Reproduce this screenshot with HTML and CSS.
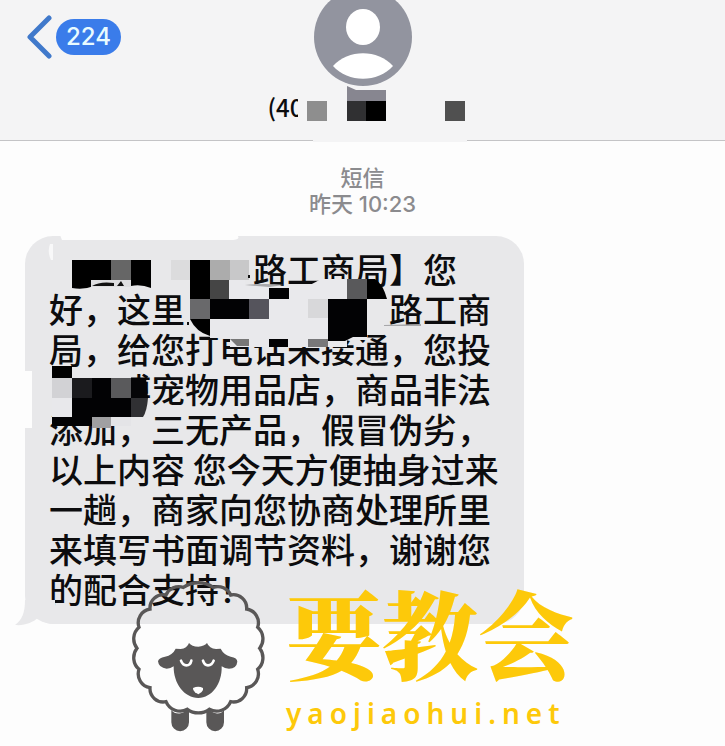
FILE: index.html
```html
<!DOCTYPE html>
<html lang="zh-CN">
<head>
    <meta charset="utf-8">
    <meta name="viewport" content="width=device-width, initial-scale=1">
    <title>短信</title>
    <link rel="stylesheet" href="styles.css">
</head>
<body>
<header class="topbar">
    <a class="back" href="#" aria-label="返回">
        <svg class="chevron" viewBox="0 0 26 44"><path d="M23 3 4 22 23 41"/></svg>
        <span class="count">224</span>
    </a>
    <div class="contact">
        <svg class="avatar" viewBox="0 12 98 86">
            <circle cx="49" cy="49" r="49" fill="#92949f"/>
            <ellipse cx="49" cy="39" rx="17" ry="18" fill="#fff"/>
            <path d="M19 78C34 61 64 61 79 78C64 95 34 95 19 78Z" fill="#fff"/>
        </svg>
        <div class="number">
            <span class="digits">(40</span>
            <svg class="number-mask" viewBox="300 87 168 36">
                <path d="M299 90h9v32h-9z" fill="#f4f4f5"/>
                <path d="M308 102h20v20h-20z" fill="#8e8e8e"/>
                <path d="M348 87l9 4h30v11h-39z" fill="#878690"/>
                <path d="M348 102h20v20h-20z" fill="#303032"/>
                <path d="M367 102h20v20h-20z" fill="#000"/>
                <path d="M446 102h20v20h-20z" fill="#505050"/>
            </svg>
        </div>
    </div>
</header>

<main class="thread">
    <p class="stamp">短信<br>昨天 10:23</p>
    <div class="bubble">
        <svg class="tail" viewBox="0 0 40 28"><path d="M10 0C10 13 7 20 0 25C10 26 18 22 23 18C28 22 33 24 40 24V0Z"/></svg>
        <p class="message">
            <span class="gap-six"></span>路工商局】您<br>
            好，这里<span class="gap-six"></span>路工商<br>
            局，给您打电话未接通，您投<br>
            <span class="gap-two"></span>博宠物用品店，商品非法<br>
            添加，三无产品，假冒伪劣，<br>
            以上内容 您今天方便抽身过来<br>
            一趟，商家向您协商处理所里<br>
            来填写书面调节资料，谢谢您<br>
            的配合支持！
        </p>
        <!-- mosaic over the private parts -->
        <svg class="mosaic" viewBox="25 236 499 388">
            <path d="M60 235H237Q242 240 230 240H62Z" fill="#fdfdfd"/>
            <path d="M24 371h8v57h-8z" fill="#fdfdfd"/>
            <path d="M50 244q-3 8 1 16h2v-16z" fill="#f8f8f9"/>

            <path d="M72 260h79v28q-10-4-20-2h-37q-10 4-22 2z" fill="#000"/>
            <path d="M111 260h20v20h-20z" fill="#666"/>
            <path d="M91 280h40v7h-40z" fill="#dedee0"/>
            <path d="M92 286q8-5 22-3v3zM117 286l4-5 3 5z" fill="#111"/>
            <path d="M171 260h19v20h-19z" fill="#dcdcdd"/>
            <path d="M210 280H245V286H308Q316 282 321 279H367V340H347V347H230V338H210z" fill="#e9e9ec"/>
            <path d="M190 260h20v76q-14-4-20-17z" fill="#000"/>
            <path d="M210 260h20v20h-20z" fill="#acacac"/>
            <path d="M230 260h19v20h-19z" fill="#c8c8c9"/>
            <path d="M210 280h19v19h-19z" fill="#454545"/>
            <path d="M190 299h20v20h-20z" fill="#69696b"/>
            <path d="M210 299h39v20h-39z" fill="#020204"/>
            <path d="M249 299h20v20h-20z" fill="#55545c"/>
            <path d="M269 288h20v11h-20z" fill="#020204"/>
            <path d="M347 279h20v20h-20z" fill="#59595b"/>
            <path d="M367 279h8q8 5 12 20h-20z" fill="#000"/>
            <path d="M308 299h20v19h-20z" fill="#d8d8da"/>
            <path d="M328 299h39v38h-14l-8 4h-17z" fill="#020204"/>
            <path d="M230 339h19v7h-12z" fill="#777"/>
            <path d="M269 339h19v8h-19z" fill="#020204"/>
            <path d="M308 339h20v8h-20z" fill="#78787a"/>
            <path d="M187 322h2v3h-2zM248 275h2v3h-2z" fill="#111"/>
            <path d="M245 285q20-2 39 0l-15 2zM384 325l37-1v2h-37z" fill="#a8a8ab"/>

            <path d="M52 366h20v12h-20z" fill="#000"/>
            <path d="M52 378h20v20h-20z" fill="#d2d2d5"/>
            <path d="M52 398h20v19h-20z" fill="#e8e8eb"/>
            <path d="M72 378h59v39H92v9H52v-9h20z" fill="#020204"/>
            <path d="M72 378h20v20h-20z" fill="#1b1b1e"/>
            <path d="M111 378h20v20h-20z" fill="#5a5a5c"/>
            <path d="M119 370h12v8h-12z" fill="#e8e8ea"/>
            <path d="M131 378h15l2 20h-17z" fill="#050507"/>
            <path d="M131 398h17q-1 13-5 19h-12z" fill="#303033"/>
            <path d="M92 417h19v11h-19z" fill="#a0a0a2"/>
            <path d="M111 417h20v9h-20z" fill="#e4e4e7"/>
        </svg>
    </div>
</main>

<div class="watermark">
    <svg class="sheep" viewBox="0 0 480 528">
        <path class="wool" d="M190 52A80 80 0 0 1 280 52A42 42 0 0 1 332 75A40 40 0 0 1 380 117A42 42 0 0 1 413 172A46 46 0 0 1 419 235A46 46 0 0 1 413 298A42 42 0 0 1 380 353A40 40 0 0 1 332 395A46 46 0 0 1 268 418A56 56 0 0 1 202 418A46 46 0 0 1 138 395A40 40 0 0 1 90 353A42 42 0 0 1 57 298A46 46 0 0 1 51 235A46 46 0 0 1 57 172A42 42 0 0 1 90 117A40 40 0 0 1 138 75A42 42 0 0 1 190 52Z"/>
        <path d="M154 420Q164 433 182 430Q196 428 201 414L207 424V457A26 26 0 0 1 154 457ZM312 420Q302 433 288 430Q274 428 268 414L259 424V457A26 26 0 0 0 312 457Z" fill="#595757"/>
        <path d="M207 219Q215 230 235 230Q253 229 261 219Q268 236 288 237L302 236Q311 254 332 260Q352 263 352 275Q350 295 327 296Q314 296 305 289C307 340 276 384 235 384C193 384 160 340 161 289Q152 296 140 296Q116 294 114 274Q116 263 135 260Q158 255 167 236L182 237Q201 236 207 219Z" fill="#595757"/>
        <path class="eyes" d="M183 272Q188 286 199 286Q211 286 214 272M249 272Q253 286 264 286Q276 286 281 272"/>
        <path d="M219 354Q235 347 249 354Q251 360 245 366L235 373L225 367Q218 361 219 354Z" fill="#fff"/>
    </svg>
    <div class="brand">
        <div class="brand-name">要教会</div>
        <div class="brand-url">yaojiaohui.net</div>
    </div>
</div>
</body>
</html>
```
FILE: styles.css
```css
body {
    margin: 0;
    position: relative;
    min-height: 100vh;
    background: #fdfdfd;
    font-family: Inter, "Noto Sans CJK SC", sans-serif;
    color: #0c0c0e;
}

.topbar {
    display: grid;
    grid-template-columns: 1fr auto 1fr;
    align-items: start;
    height: 140px;
    background: #f4f4f5;
    border-bottom: 1px solid #c4c4c6;
}

.back {
    display: flex;
    align-items: center;
    gap: 4px;
    padding: 15px 0 0 26px;
    text-decoration: none;
}

.chevron {
    width: 26px;
    height: 44px;
    fill: none;
    stroke: #4079cb;
    stroke-width: 5;
    stroke-linecap: round;
    stroke-linejoin: round;
}

.count {
    padding: 0 10px;
    border-radius: 18px;
    background: #3a7cea;
    color: #e9fbff;
    font-size: 24px;
    font-weight: 500;
    line-height: 36px;
}

.contact {
    display: flex;
    flex-direction: column;
    align-items: center;
}

.avatar {
    display: block;
    width: 98px;
    height: 86px;
}

.number {
    display: flex;
    height: 56px;
    padding-left: 10px;
    background: linear-gradient(#f4f4f5, #f4f4f5) right / 154px 100% no-repeat;
}

.digits {
    margin-right: -4px;
    color: #0c0c0e;
    font-family: "Noto Sans CJK SC", sans-serif;
    font-size: 24px;
    font-weight: 500;
    line-height: 42px;
}

.number-mask {
    width: 168px;
    height: 36px;
    overflow: visible;
}

.thread {
    padding: 24px 25px 0;
}

.stamp {
    margin: 0 0 19px;
    color: #8b8b8e;
    font-size: 22px;
    font-weight: 500;
    line-height: 26px;
    text-align: center;
}

.bubble {
    position: relative;
    width: fit-content;
    padding: 13px 25px 15px 24px;
    border-radius: 28px;
    background: #e8e8ea;
}

.message {
    margin: 0;
    font-family: "Noto Sans CJK SC", sans-serif;
    font-size: 34px;
    font-weight: 500;
    line-height: 40px;
    white-space: nowrap;
}

.gap-six,
.gap-two {
    display: inline-block;
    width: 6em;
}

.gap-two {
    width: 2em;
}

.tail {
    position: absolute;
    left: -10px;
    bottom: -4px;
    width: 40px;
    height: 28px;
    fill: #e8e8ea;
}

.mosaic {
    position: absolute;
    left: 0;
    top: 0;
    width: 499px;
    height: 388px;
    overflow: visible;
}

/* site mark laid over the conversation */
.watermark {
    position: absolute;
    left: 120px;
    top: 570px;
    display: flex;
    gap: 6px;
}

.sheep {
    width: 160px;
    height: 176px;
}

.wool {
    fill: none;
    stroke: #595757;
    stroke-width: 10;
}

.eyes {
    fill: none;
    stroke: #fff;
    stroke-width: 8;
    stroke-linecap: round;
}

.brand {
    padding-top: 6px;
    color: #fdc90a;
    white-space: nowrap;
}

.brand-name {
    font-family: "Noto Serif CJK SC", "Noto Sans CJK SC", serif;
    font-size: 96px;
    font-weight: 900;
    line-height: 110px;
}

.brand-url {
    font-family: "Noto Sans", sans-serif;
    font-size: 28px;
    font-weight: 600;
    letter-spacing: 6px;
    line-height: 54px;
}
```
